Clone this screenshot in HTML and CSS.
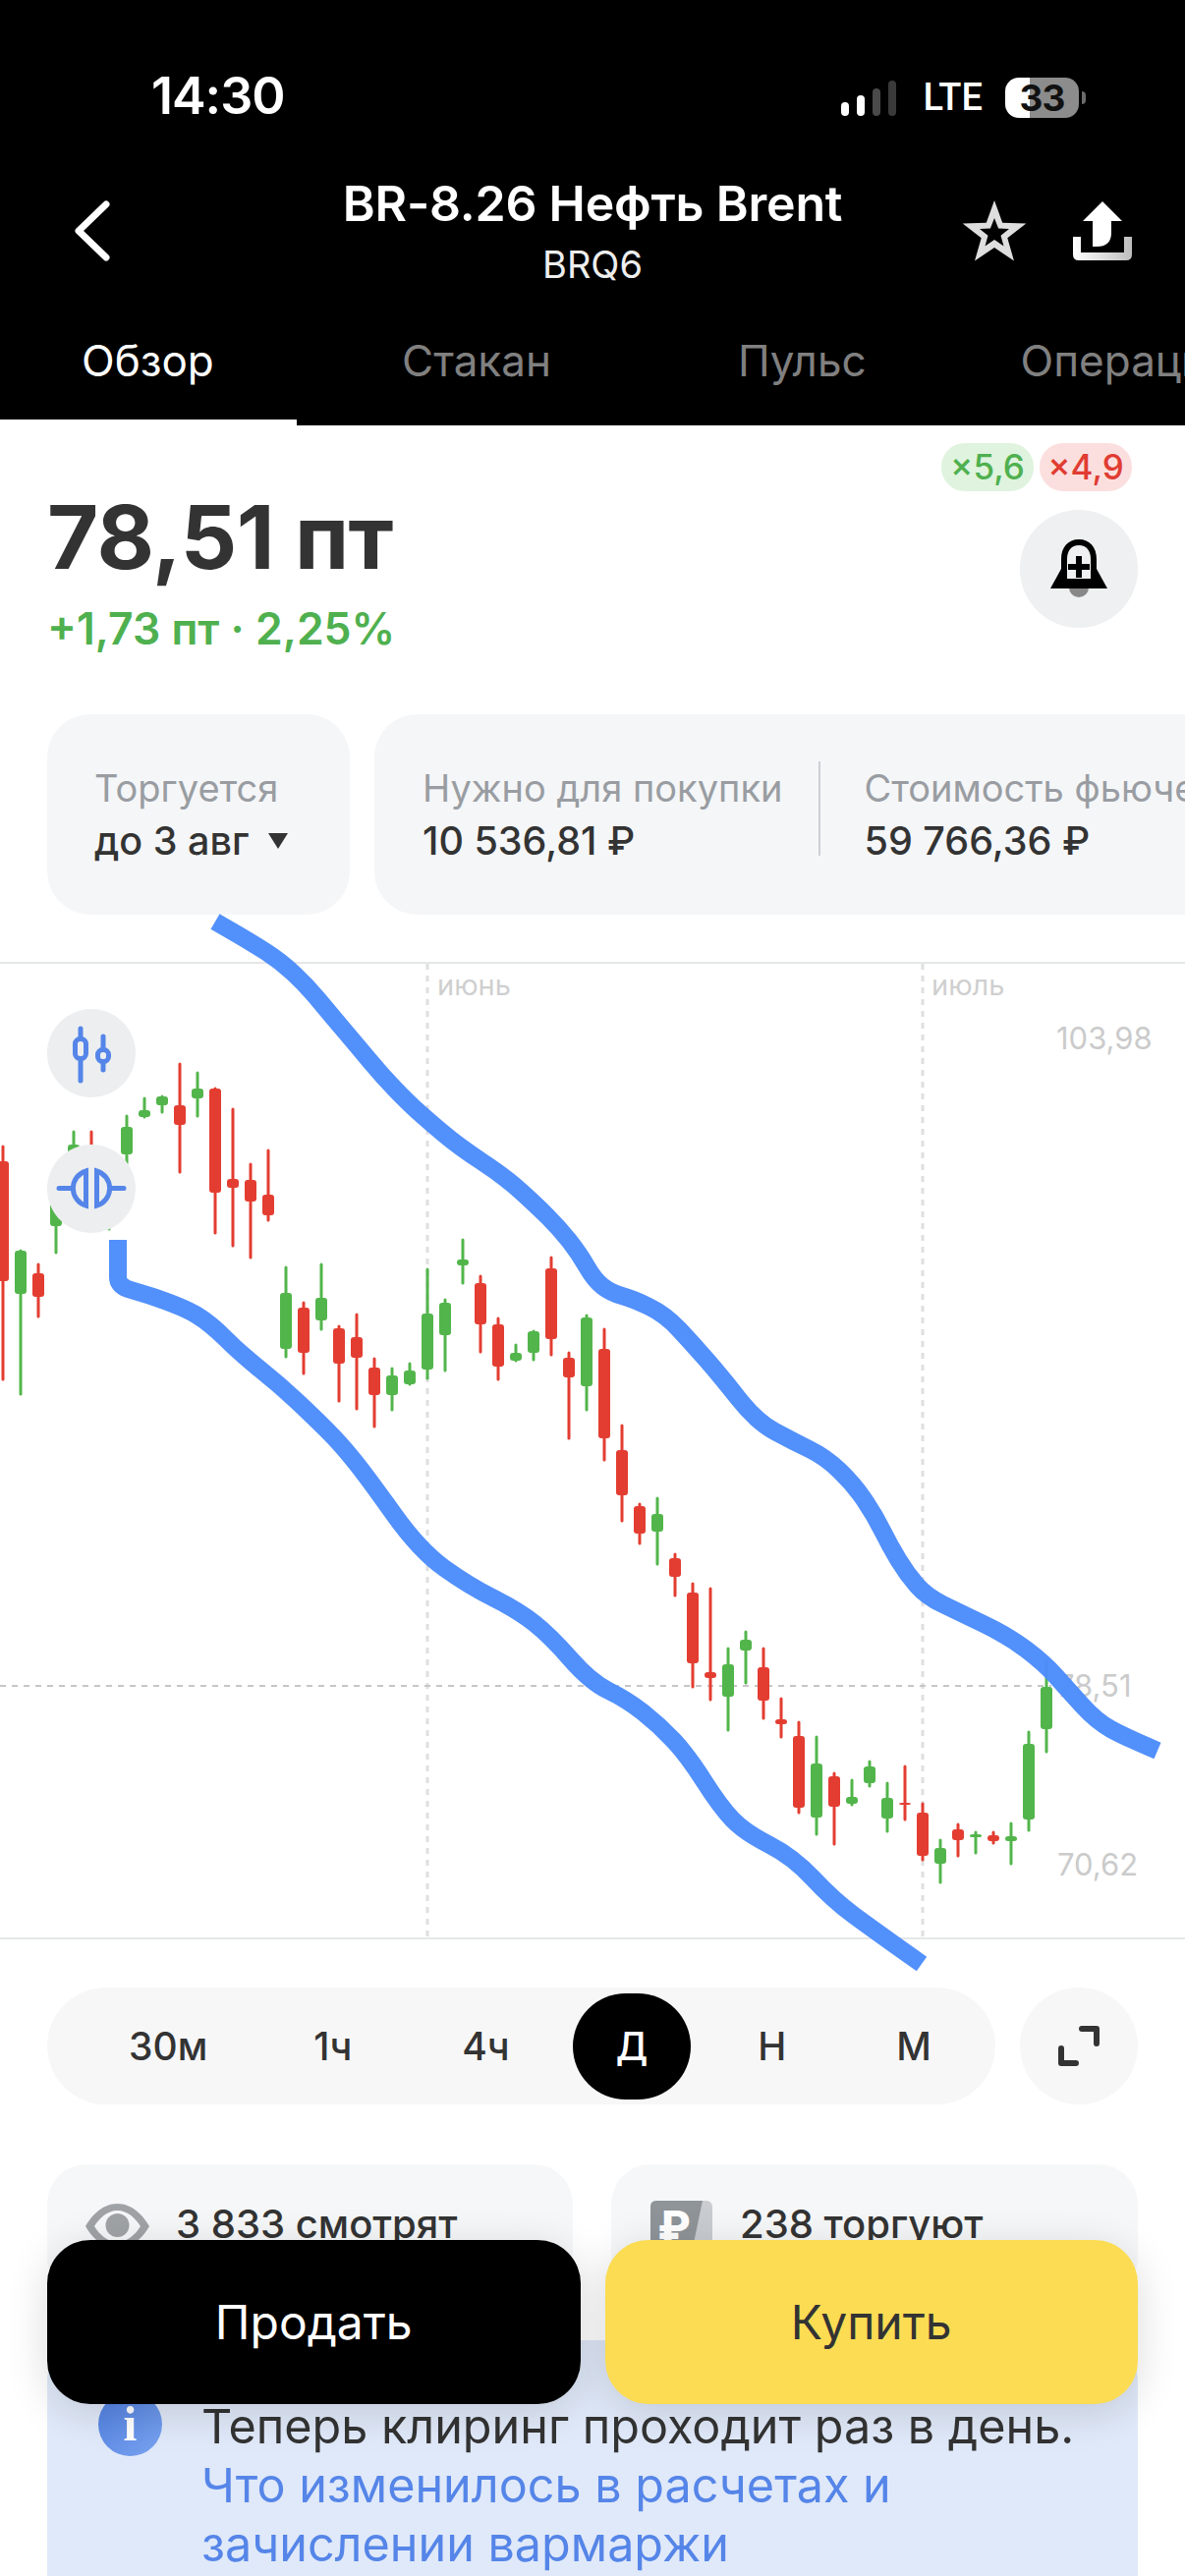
FILE: index.html
```html
<!DOCTYPE html>
<html lang="ru">
<head>
<meta charset="utf-8">
<title>BR-8.26 Нефть Brent</title>
<link rel="stylesheet" href="styles.css">
</head>
<body>
<div class="page">
  <header class="top">
    <div class="statusbar">
      <span class="time">14:30</span>
      <div class="sys">
        <div class="signal"><i class="b1"></i><i class="b2"></i><i class="b3"></i><i class="b4"></i></div>
        <span class="lte">LTE</span>
        <div class="battery"><span>33</span></div>
      </div>
    </div>
    <div class="nav">
      <svg class="back" width="40" height="62" viewBox="0 0 40 62"><path d="M33 4 L5 31 L33 58"/></svg>
      <div class="titles">
        <div class="title">BR-8.26 Нефть Brent</div>
        <div class="ticker">BRQ6</div>
      </div>
      <div class="nav-actions">
        <svg width="66" height="64" viewBox="0 0 66 64"><path class="star" fill-rule="evenodd" d="M33 1L41.2 23.7L65.3 24.5L46.3 39.3L53 62.5L33 49L13 62.5L19.7 39.3L.7 24.5L24.8 23.7ZM33 19L28.900 29.500L18 30L26.500 36.800L23.500 47.500L33 41L42.500 47.500L39.500 36.800L48 30L37.100 29.500Z"/></svg>
        <svg width="60" height="60" viewBox="0 0 60 60"><defs><linearGradient id="tray" x1="0" x2="1" y1="0" y2="0"><stop offset="0" stop-color="#fff"/><stop offset="1" stop-color="#bdbdbd"/></linearGradient></defs><path fill="#fff" d="M30 0L50 20H39V32Q39 46 24 46H20V20H10Z"/><path fill="url(#tray)" d="M0 36H8V52H52V36H60V54Q60 60 54 60H6Q0 60 0 54Z"/></svg>
      </div>
    </div>
    <nav class="tabs">
      <a class="tab tab-active">Обзор</a>
      <a class="tab">Стакан</a>
      <a class="tab">Пульс</a>
      <a class="tab tab-last">Операции</a>
    </nav>
  </header>

  <section class="quote">
    <div class="price-col">
      <div class="price">78,51 пт</div>
      <div class="change">+1,73 пт · 2,25%</div>
    </div>
    <div class="quote-side">
      <div class="chips"><span class="chip chip-up">×5,6</span><span class="chip chip-down">×4,9</span></div>
      <div class="bell">
        <svg width="60" height="60" viewBox="0 0 60 60"><path class="clapper" d="M20 49H40A10 10 0 0 1 20 49Z"/><path fill-rule="evenodd" d="M30 0C41 0 48 8 48 20V30L59 50H1L12 30V20C12 8 19 0 30 0ZM30 6C22 6 18 12 18 20V40H42V20C42 12 38 6 30 6Z"/><path d="M27 17H33V25H41V31H33V39H27V31H19V25H27Z"/></svg>
      </div>
    </div>
  </section>

  <section class="cards">
    <div class="card card-exp">
      <div class="card-label">Торгуется</div>
      <div class="card-value">до 3 авг<i class="caret"></i></div>
    </div>
    <div class="card card-wide">
      <div class="cell cell-first">
        <div class="card-label">Нужно для покупки</div>
        <div class="card-value">10 536,81 ₽</div>
      </div>
      <div class="cell">
        <div class="card-label">Стоимость фьючерса</div>
        <div class="card-value">59 766,36 ₽</div>
      </div>
    </div>
  </section>

  <section class="chart">
    <svg class="plot" width="1206" height="995" viewBox="0 979 1206 995">
      <path class="grid-v" d="M435 981V1972M939 981V1972"/>
      <path class="grid-h" d="M0 1716H1070"/>
      <text class="month" x="445" y="1013">июнь</text>
      <text class="month" x="948" y="1013">июль</text>
      <text class="axis" x="1075" y="1068">103,98</text>
      <text class="axis" x="1076" y="1727">78,51</text>
      <text class="axis" x="1076" y="1909">70,62</text>
      <g class="candles up">
        <path d="M21 1273V1419M57 1200V1275M75 1152V1200M111 1195V1251M129 1136V1184M147 1118V1137M165 1116V1132M201 1092V1136M291 1290V1381M327 1287V1353M399 1393V1435M417 1388V1409M435 1292V1403M453 1323V1395M471 1262V1306M525 1369V1385M543 1355V1384M597 1339V1435M669 1525V1592M741 1678V1761M759 1661V1713M831 1768V1867M867 1812V1837M885 1793V1818M903 1815V1864M957 1873V1916M993 1865V1886M1029 1856V1897M1047 1763V1863M1065 1690V1783"/>
        <rect x="15" y="1273" height="44"/><rect x="51" y="1220" height="28"/><rect x="69" y="1165" height="30"/><rect x="105" y="1205" height="30"/><rect x="123" y="1147" height="28"/><rect x="141" y="1130" height="7"/><rect x="159" y="1116" height="9"/><rect x="195" y="1108" height="10"/><rect x="285" y="1316" height="57"/><rect x="321" y="1321" height="23"/><rect x="393" y="1400" height="20"/><rect x="411" y="1395" height="14"/><rect x="429" y="1337" height="57"/><rect x="447" y="1326" height="33"/><rect x="465" y="1282" height="6"/><rect x="519" y="1377" height="8"/><rect x="537" y="1355" height="22"/><rect x="591" y="1341" height="70"/><rect x="663" y="1541" height="18"/><rect x="735" y="1694" height="33"/><rect x="753" y="1669" height="11"/><rect x="825" y="1795" height="55"/><rect x="861" y="1829" height="7"/><rect x="879" y="1798" height="17"/><rect x="897" y="1830" height="21"/><rect x="951" y="1881" height="16"/><rect x="987" y="1867" height="3"/><rect x="1023" y="1869" height="5"/><rect x="1041" y="1775" height="77"/><rect x="1059" y="1717" height="43"/>
      </g>
      <g class="candles down">
        <path d="M3 1167V1404M39 1287V1340M93 1152V1195M183 1083V1193M219 1108V1255M237 1129V1268M255 1185V1280M273 1171V1242M309 1326V1398M345 1350V1426M363 1338V1434M381 1383V1452M489 1299V1376M507 1342V1404M561 1280V1379M579 1377V1464M615 1353V1486M633 1451V1548M651 1531V1571M687 1582V1624M705 1612V1717M723 1617V1730M777 1678V1749M795 1729V1768M813 1753V1845M849 1805V1877M921 1798V1852M939 1836V1893M975 1857V1889M1011 1865V1876"/>
        <rect x="-3" y="1182" height="122"/><rect x="33" y="1296" height="24"/><rect x="87" y="1170" height="20"/><rect x="177" y="1125" height="20"/><rect x="213" y="1108" height="106"/><rect x="231" y="1200" height="9"/><rect x="249" y="1201" height="22"/><rect x="267" y="1216" height="21"/><rect x="303" y="1331" height="46"/><rect x="339" y="1352" height="36"/><rect x="357" y="1361" height="21"/><rect x="375" y="1392" height="28"/><rect x="483" y="1306" height="42"/><rect x="501" y="1348" height="43"/><rect x="555" y="1291" height="72"/><rect x="573" y="1382" height="20"/><rect x="609" y="1373" height="91"/><rect x="627" y="1476" height="46"/><rect x="645" y="1533" height="28"/><rect x="681" y="1586" height="19"/><rect x="699" y="1621" height="72"/><rect x="717" y="1702" height="6"/><rect x="771" y="1697" height="34"/><rect x="789" y="1750" height="5"/><rect x="807" y="1767" height="73"/><rect x="843" y="1808" height="31"/><rect x="915" y="1835" height="2"/><rect x="933" y="1845" height="44"/><rect x="969" y="1862" height="11"/><rect x="1005" y="1868" height="6"/>
      </g>
      <path class="marker" d="M219 938L238 949Q257 960 271 969Q285 978 298.500 990.500Q312 1003 324 1017.500Q336 1032 350 1048.500Q364 1065 376.500 1080Q389 1095 402 1108.500Q415 1122 425 1131Q435 1140 451 1153.500Q467 1167 490.500 1182.500Q514 1198 530 1212.500Q546 1227 557.500 1238.500Q569 1250 579 1262.500Q589 1275 597 1289Q605 1303 613.500 1309.500Q622 1316 633 1319Q644 1322 660.500 1330Q677 1338 691 1353Q705 1368 719 1384Q733 1400 751.500 1423.500Q770 1447 788.500 1457Q807 1467 823.500 1475Q840 1483 854.500 1497Q869 1511 879.500 1526.500Q890 1542 898 1558Q906 1574 914.500 1588Q923 1602 933 1613.500Q943 1625 959.500 1633Q976 1641 1001 1653Q1026 1665 1044.500 1679Q1063 1693 1075 1706.500Q1087 1720 1101.500 1736Q1116 1752 1130.500 1760Q1145 1768 1178 1782"/>
      <path class="marker" d="M120 1262V1300Q120 1308 130 1312L153 1319Q186 1330 200 1338.500Q214 1347 229.500 1362.500Q245 1378 265 1394Q285 1410 302.500 1426.500Q320 1443 333.500 1456.500Q347 1470 361 1487.500Q375 1505 401 1541.500Q427 1578 452 1596Q477 1614 502 1626.500Q527 1639 543.500 1652Q560 1665 580.500 1688.500Q601 1712 619.500 1721Q638 1730 654.500 1743Q671 1756 685.500 1771.500Q700 1787 716.500 1813Q733 1839 745.500 1852Q758 1865 782.500 1877.500Q807 1890 827.500 1912Q848 1934 869 1949.500Q890 1965 938 1999"/>
    </svg>
    <div class="chart-tools">
      <button class="tool"><svg width="50" height="60" viewBox="-2 -3 50 60"><path d="M12 2V12M12 33V55M35 10V23M35 36V44"/><rect x="6.500" y="12.500" width="11" height="20" rx="5"/><rect x="29.500" y="23.500" width="11" height="12" rx="5"/></svg></button>
      <button class="tool"><svg width="70" height="50" viewBox="0 0 70 50"><path d="M2 24.500H16M54 24.500H68M29.500 6.800A18.500 18.500 0 0 0 29.500 42.200ZM40.500 6.800A18.500 18.500 0 0 1 40.500 42.200Z"/></svg></button>
    </div>
  </section>

  <section class="periods">
    <div class="period-bar">
      <span class="period">30м</span>
      <span class="period">1ч</span>
      <span class="period period-wide">4ч</span>
      <span class="period period-active">Д</span>
      <span class="period">Н</span>
      <span class="period period-wide">М</span>
    </div>
    <button class="expand"><svg width="42" height="41" viewBox="0 0 42 41"><path d="M24 3H39V18M3 23V38H18"/></svg></button>
  </section>

  <section class="stats">
    <div class="stat">
      <svg class="eye" width="65" height="46" viewBox="0 0 65 46"><path class="eye-shell" fill-rule="evenodd" d="M32.500 0C47 0 58 11 65 23C58 35 47 46 32.500 46C18 46 7 35 0 23C7 11 18 0 32.500 0ZM32.500 7C22 7 14 15 9 23C14 31 22 39 32.500 39C43 39 51 31 56 23C51 15 43 7 32.500 7Z"/><circle class="eye-iris" cx="32.500" cy="22" r="12"/></svg>
      <span>3 833 смотрят</span>
    </div>
    <div class="stat stat-right">
      <svg class="rub" width="63" height="62" viewBox="0 0 63 62"><rect class="rub-back" width="63" height="62" rx="6"/><path class="rub-front" d="M6 0H53L40 62H0V6Q0 0 6 0Z"/><text class="rub-sign" x="24" y="42">₽</text></svg>
      <span>238 торгуют</span>
    </div>
  </section>

  <section class="notice">
    <div class="info"><span>i</span></div>
    <div class="notice-text">
      Теперь клиринг проходит раз в день.<br>
      <a class="notice-link">Что изменилось в расчетах и зачислении вармаржи</a>
    </div>
  </section>

  <div class="actions">
    <button class="action action-sell">Продать</button>
    <button class="action action-buy">Купить</button>
  </div>
</div>
</body>
</html>
```
FILE: styles.css
```css
* { box-sizing: border-box; }
html, body { margin: 0; padding: 0; background: #fff; }
body { font-family: Inter, "Noto Sans", "Liberation Sans", sans-serif; color: #333; }
.page { position: relative; width: 1206px; height: 2622px; overflow: hidden; background: #fff; }
button { font: inherit; border: 0; padding: 0; color: inherit; }

/* header */
.top { height: 433px; background: #000; color: #fff; display: flex; flex-direction: column; }
.statusbar { display: flex; justify-content: space-between; align-items: center; height: 41px; margin-top: 77px; padding: 0 108px 0 154px; }
.time { font-size: 52px; font-weight: 600; letter-spacing: -1px; line-height: 41px; }
.sys { display: flex; align-items: center; margin-top: 3px; }
.signal { display: flex; align-items: flex-end; gap: 8px; height: 37px; }
.signal i { display: block; width: 8px; border-radius: 4px; }
.b1 { height: 14px; background: #fff; }
.b2 { height: 21px; background: #fff; }
.b3 { height: 28px; background: #4a4a4a; }
.b4 { height: 36px; background: #3a3a3a; }
.lte { font-family: Roboto, sans-serif; font-size: 38px; font-weight: 500; margin: 0 23px 0 27px; line-height: 41px; }
.battery { position: relative; width: 75px; height: 41px; border-radius: 14px; background: linear-gradient(90deg, #fff 33%, #8c8c8c 33%); color: #111; display: flex; align-items: center; justify-content: center; font-size: 37px; font-weight: 700; letter-spacing: -1px; }
.battery::after { content: ""; position: absolute; left: 78px; top: 14px; width: 4px; height: 13px; border-radius: 0 4px 4px 0; background: #6b6b6b; }

.nav { display: grid; grid-template-columns: 1fr auto 1fr; align-items: center; height: 113px; margin-top: 60px; }
.back { margin-left: 75px; }
.back path { fill: none; stroke: #fff; stroke-width: 7; stroke-linecap: round; stroke-linejoin: round; }
.titles { text-align: center; }
.title { font-size: 50px; font-weight: 600; line-height: 58px; letter-spacing: -.2px; }
.ticker { font-size: 38px; line-height: 44px; margin-top: 11px; color: #eee; }
.nav-actions { display: flex; justify-content: flex-end; align-items: center; gap: 47px; padding-right: 54px; }
.star { fill: #dedede; }
.tabs { display: flex; gap: 24px; flex: 1; margin-top: 28px; white-space: nowrap; }
.tab { display: block; padding: 24px 83px 0; color: #808080; font-size: 44px; line-height: 48px; }
.tab-active { color: #fff; border-bottom: 6px solid #fff; width: 302px; flex: none; padding-right: 0; }
.tab-last { margin-left: -33px; }

/* price */
.quote { display: flex; justify-content: space-between; height: 294px; padding: 18px 48px 0; }
.price-col { padding-top: 52px; }
.price { font-size: 90px; font-weight: 700; line-height: 88px; color: #333; letter-spacing: -.5px; }
.change { font-size: 44.500px; font-weight: 600; line-height: 50px; margin-top: 24px; color: #4fb04f; }
.quote-side { display: flex; flex-direction: column; align-items: flex-end; }
.chips { display: flex; gap: 6px; margin-right: 6px; }
.chip { display: block; height: 49px; border-radius: 24px; width: 94px; text-align: center; font-size: 35px; font-weight: 500; line-height: 49px; }
.chip-up { background: #dff3de; color: #4fb04f; }
.chip-down { background: #fbdfde; color: #e03c32; }
.bell { width: 120px; height: 120px; margin-top: 19px; border-radius: 50%; background: #eef0f1; display: flex; align-items: center; justify-content: center; }
.clapper { fill: #888; }

/* info cards */
.cards { display: flex; gap: 25px; height: 204px; padding-left: 48px; white-space: nowrap; }
.card { flex: none; height: 204px; border-radius: 44px; background: #f5f6f8; }
.card-exp { width: 308px; padding: 50px 0 0 48px; }
.card-wide { display: flex; width: 900px; padding: 50px 0 0 49px; }
.cell-first { padding-right: 39px; margin-right: 44px; position: relative; }
.cell-first::after { content: ""; position: absolute; right: 0; top: -2px; height: 96px; width: 2px; background: #ccd0d4; }
.card-label { font-size: 38px; line-height: 50px; color: #999da2; }
.card-value { font-size: 39.500px; font-weight: 500; line-height: 50px; margin-top: 4px; color: #333; display: flex; align-items: center; }
.caret { display: block; margin-left: 20px; border-style: solid; border-width: 16px 10px 0; border-color: #333 transparent transparent; }

/* chart */
.chart { position: relative; height: 995px; margin-top: 48px; border-top: 2px solid #e4e6e8; border-bottom: 2px solid #e4e6e8; }
.plot { position: absolute; left: 0; top: -2px; overflow: visible; }
.grid-v { fill: none; stroke: #dfdfdf; stroke-width: 3; stroke-dasharray: 6 6; }
.grid-h { fill: none; stroke: #c6c6c6; stroke-width: 2; stroke-dasharray: 6 6; }
.month { font-size: 29px; fill: #cfcfcf; }
.axis { font-size: 31px; fill: #cbcbcb; }
.candles path { fill: none; stroke-width: 3; stroke-linecap: round; }
.candles rect { width: 12px; rx: 3px; }
.up path { stroke: #52b54b; }
.up rect { fill: #52b54b; }
.down path { stroke: #e33d31; }
.down rect { fill: #e33d31; }
.marker { fill: none; stroke: #4c8cfb; stroke-width: 18; stroke-linejoin: round; opacity: .97; }
.chart-tools { position: absolute; left: 48px; top: 46px; display: flex; flex-direction: column; gap: 48px; }
.tool { width: 90px; height: 90px; border-radius: 50%; background: #eceeef; display: flex; align-items: center; justify-content: center; }
.tool svg { overflow: visible; }
.tool path, .tool rect { fill: none; stroke: #5585e8; stroke-width: 5; stroke-linecap: round; }

/* periods */
.periods { display: flex; gap: 25px; padding: 0 48px; margin-top: 49px; }
.period-bar { flex: 1; height: 119px; border-radius: 60px; background: #f7f7f8; display: flex; align-items: center; padding-left: 29px; }
.period { padding: 0 54px; font-size: 39px; font-weight: 500; line-height: 108px; color: #333; }
.period-wide { margin-left: 4px; }
.period-active { margin: 0 14px 0 10px; padding: 0 44px; border-radius: 54px; background: #000; color: #fff; }
.expand { flex: none; width: 120px; height: 119px; border-radius: 50%; background: #f7f7f8; display: flex; align-items: center; justify-content: center; }
.expand path { fill: none; stroke: #333; stroke-width: 6; stroke-linecap: round; stroke-linejoin: round; }

/* stats */
.stats { display: flex; gap: 39px; padding: 0 48px; margin-top: 61px; }
.stat { flex: 1; height: 135px; border-radius: 40px; background: #f6f7f8; display: flex; align-items: flex-start; gap: 27px; padding: 40px 0 0 39px; font-size: 40px; font-weight: 500; line-height: 42px; color: #333; }
.stat-right { padding-left: 40px; gap: 28px; }
.eye-shell, .eye-iris { fill: #a0a3a6; }
.rub { margin-top: -3px; }
.rub-back { fill: #c9ccd0; }
.rub-front { fill: #8f9499; }
.rub-sign { font-size: 44px; font-weight: 800; fill: #fff; text-anchor: middle; }

/* notice */
.notice { display: flex; gap: 40px; height: 300px; margin: 44px 48px 0; padding: 58px 30px 0 52px; background: #e0e9f9; border-radius: 40px 40px 0 0; }
.info { flex: none; width: 65px; height: 65px; margin-top: -5px; border-radius: 50%; background: linear-gradient(135deg, #4f7fe0, #7aa3f0); display: flex; align-items: center; justify-content: center; color: #fff; font-family: "Liberation Serif", serif; font-size: 50px; font-weight: 700; line-height: 65px; }
.notice-text { font-size: 48.500px; line-height: 60px; color: #333; }
.notice-link { color: #5585e8; }

/* sticky actions */
.actions { position: absolute; left: 48px; right: 48px; top: 2280px; display: flex; gap: 25px; }
.action { flex: 1; height: 167px; border-radius: 44px; font-size: 48px; box-shadow: 0 8px 44px rgba(0, 0, 0, .14); }
.action-sell { background: #000; color: #fff; }
.action-buy { background: #fbdc53; color: #333; }
```
